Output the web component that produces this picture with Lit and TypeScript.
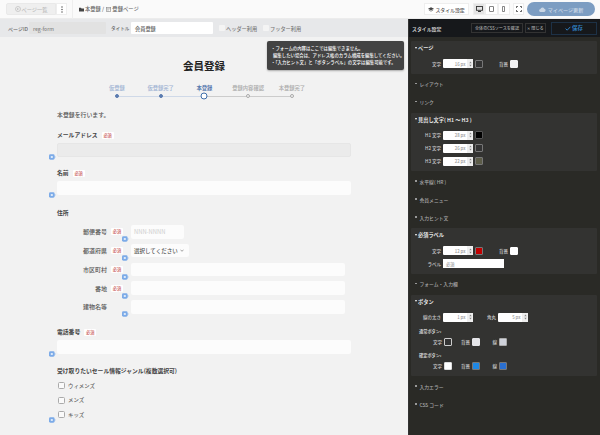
import { LitElement, html, css } from "lit";
import { customElement } from "lit/decorators.js";

const pen = html`<svg class="pen" viewBox="0 0 7 6" width="7" height="6"><rect x="0" y="0.3" width="5.6" height="5.4" rx="1.4" fill="#7cabe8"/><path d="M5.4 2.2 7 3 5.4 3.8z" fill="#7cabe8"/><rect x="1.8" y="2" width="2" height="2" fill="#dbe8f8"/></svg>`;
const req = html`<span class="req">必須</span>`;

@customElement("app-root")
export class AppRoot extends LitElement {
  static styles = css`
    :host { display: block; width: 600px; height: 435px; overflow: hidden; position: relative; background: #f2f2f2; color: #555;
      font-family: "Noto Sans CJK JP", "Noto Sans", sans-serif; font-size: 6px; }
    * { box-sizing: border-box; }
    .top { height: 19px; background: #fafafa; border-bottom: 1px solid #ececec; display: flex; align-items: center; padding: 0 5px 0 6px; }
    .btn-list { width: 50px; height: 12px; background: #efefef; border: 1px solid #e9e9e9; border-radius: 2px 0 0 2px; color: #bbb; font-size: 5.2px; font-weight: 500; display: flex; align-items: center; justify-content: center; gap: 1px; }
    .kebab { width: 11px; height: 12px; background: #fff; border: 1px solid #eee; display: flex; align-items: center; justify-content: center; }
    .sep { width: 1px; height: 19px; background: #eee; margin: 0 6px 0 5px; }
    .crumb { display: flex; align-items: center; gap: 1px; color: #666; font-size: 5.3px; font-weight: 500; white-space: nowrap; }
    .spacer { flex: 1; }
    .wbtn { height: 12px; background: #fff; border: 1px solid #eee; display: flex; align-items: center; justify-content: center; font-size: 4.9px; font-weight: 500; color: #555; white-space: nowrap; }
    .style-btn { width: 45px; gap: 1.5px; margin-right: 4px; }
    .dev { display: flex; margin-right: 3px; }
    .dev .wbtn { width: 12.4px; }
    .dev .on { background: #e4e4e4; }
    .full { width: 11px; margin-right: 3px; }
    .publish { width: 68px; height: 14px; border-radius: 7px; background: #7c9dc2; color: #c9d6e5; font-size: 5.1px; font-weight: 500; display: flex; align-items: center; justify-content: center; gap: 2px; white-space: nowrap; }
    .body { display: flex; height: 416px; }
    .left { width: 408px; overflow: hidden; }
    .sub { height: 18px; background: #e7e8ea; display: flex; align-items: center; padding-left: 8px; font-size: 5px; font-weight: 500; color: #666; white-space: nowrap; }
    .in { height: 12px; font-size: 5px; display: flex; align-items: center; padding-left: 4px; border-radius: 1px; flex: none; }
    .pid-cap { width: 20px; }
    .pid { width: 77px; margin: 0 5px 0 1px; background: #e2e2e2; color: #888; }
    .ttl { width: 82px; margin: 0 6px 0 2px; background: #fff; color: #666; font-size: 5.2px; }
    .cap { width: 18px; font-size: 4.6px; }
    .cb { width: 6px; height: 6px; background: #f4f4f4; border-radius: 1px; margin-right: 1px; flex: none; }
    .sub span.t { width: 31px; margin-right: 6px; color: #777; font-size: 5.2px; }
    .main { padding-left: 57px; position: relative; }
    h1 { margin: 20px 0 0; width: 294px; text-align: center; font-size: 10.5px; line-height: 18px; color: #222; font-weight: 700; }
    .steps { display: flex; margin: 9px 0 0 38px; }
    .step { width: 43.75px; position: relative; text-align: center; font-size: 5.3px; font-weight: 500; line-height: 8px; height: 16px; color: #aaa; white-space: nowrap; }
    .step.done { color: #9fb2d2; }
    .step.cur { color: #5b7cb0; font-weight: 700; }
    .step i { position: absolute; left: 50%; top: 12px; transform: translate(-50%, -50%); width: 4px; height: 4px; border-radius: 50%; background: #f2f2f2; border: 1px solid #aaa; z-index: 1; }
    .step.done i { background: #5b7cb0; border-color: #5b7cb0; }
    .step.cur i { width: 7px; height: 7px; border: 1.2px solid #3f6eaa; background: #fff; }
    .step:not(:last-child)::after { content: ""; position: absolute; left: 50%; width: 100%; top: 11.5px; height: 1px; background: #ccc; }
    .step.done::after { background: #cfd9e8 !important; }
    .intro { margin-top: 10px; line-height: 10px; color: #555; font-size: 5.9px; font-weight: 500; }
    .field { position: relative; width: 294px; }
    .lab { height: 10px; line-height: 10px; font-weight: 700; color: #444; font-size: 5.8px; display: flex; align-items: center; gap: 4px; white-space: nowrap; }
    .req { background: #fff; color: #c65050; font-size: 4.2px; line-height: 7px; height: 7px; padding: 0 1.8px; font-weight: 500; border-radius: 1px; display: inline-block; white-space: nowrap; }
    .box { height: 14px; background: #fcfcfc; border-radius: 2px; margin-top: 2.5px; }
    .box.off { background: #ebebeb; border: 1px solid #e6e6e6; }
    .pen { position: absolute; display: block; }
    .field > .pen { left: -8px; bottom: -3.5px; }
    .addr { margin-top: 7.5px; display: flex; flex-direction: column; gap: 5.25px; }
    .row { position: relative; height: 13.5px; display: flex; align-items: center; }
    .row .rl { width: 50px; text-align: right; color: #555; font-size: 6px; font-weight: 500; white-space: nowrap; }
    .row .rb { width: 24px; padding-left: 4px; display: flex; }
    .row .val { width: 214px; height: 13.5px; background: #fcfcfc; border-radius: 2px; display: flex; align-items: center; padding-left: 3px; }
    .row .val.zip { width: 53px; color: #ccc; font-size: 5.8px; }
    .row .val.sel { width: 58px; color: #555; font-size: 5.5px; font-weight: 500; white-space: nowrap; gap: 2px; }
    .row .pen { left: 65px; bottom: -3.75px; }
    .checks { display: flex; flex-direction: column; gap: 4.5px; margin-top: 5px; }
    .check { display: flex; align-items: center; height: 10px; color: #666; font-size: 5.4px; font-weight: 500; gap: 3px; padding-left: 1px; }
    .check b { width: 7px; height: 7px; border: 1px solid #aaa; border-radius: 1.5px; background: #fafafa; }
    .tip { position: absolute; left: 267px; top: 41px; width: 137px; height: 29px; background: #434343; border-radius: 2px; color: #fff; font-size: 4.4px; font-weight: 500; line-height: 7px; padding: 4px; box-shadow: 0 1px 2px rgba(0,0,0,.3); white-space: nowrap; z-index: 5; }
    .panel { width: 192px; background: #2a2a26; color: #ddd; border-left: 1px solid #333; }
    .phead { height: 18px; background: #16181b; display: flex; align-items: center; padding: 0 3px; font-size: 4.9px; font-weight: 700; color: #ccc; white-space: nowrap; }
    .phead .pb { height: 9.5px; border: 1px solid #333; font-size: 4.1px; font-weight: 500; display: flex; align-items: center; justify-content: center; color: #aaa; white-space: nowrap; }
    .save { width: 46px; height: 13px; border: 1px solid #1d3146; margin-left: 5px; color: #2f7fc0; font-size: 5.4px; display: flex; align-items: center; justify-content: center; gap: 1px; }
    .pbody { padding: 4px 3px 0 2px; }
    .sec { background: #333331; border-radius: 1px; margin: 2px 0 1px; padding-bottom: 5.5px; }
    .sec:first-child { margin-top: 0; }
    .sec .st { height: 13px; display: flex; align-items: center; padding-left: 4px; gap: 1px; font-size: 5.2px; color: #e4e4e4; font-weight: 700; white-space: nowrap; }
    .sec .st::before { content: ""; width: 0; height: 0; border-left: 1.5px solid transparent; border-right: 1.5px solid transparent; border-top: 2.5px solid #fff; }
    .sec .rows { margin-top: 5px; display: flex; flex-direction: column; gap: 4px; }
    .col { height: 18px; display: flex; align-items: center; padding-left: 4px; gap: 3px; font-size: 4.8px; font-weight: 500; color: #a8a8a8; white-space: nowrap; }
    .col::before { content: ""; width: 1.5px; height: 1.5px; background: #999; }
    .pr { display: flex; align-items: center; height: 9px; }
    .pl { width: 30px; text-align: right; font-size: 4.5px; font-weight: 500; color: #ccc; margin-right: 2px; white-space: nowrap; flex: none; }
    .pl.b1 { width: 31px; }
    .pl.b2 { width: 18px; }
    .pl.b3 { width: 17px; }
    .pl.k { width: 21px; }
    .pl.bg { width: 25px; }
    .num { width: 30px; height: 9px; background: #fff; color: #999; font-size: 4.3px; font-weight: 500; display: flex; align-items: center; justify-content: flex-end; border-radius: 1px; margin-right: 2px; flex: none; }
    .num u { text-decoration: none; width: 6px; height: 9px; background: #eee; display: flex; align-items: center; justify-content: center; margin-left: 1.5px; }
    .sw { width: 8px; height: 8px; border: 1px solid #777; border-radius: 1px; flex: none; }
    .txt { width: 61px; height: 9px; background: #fff; color: #999; font-size: 4.2px; font-weight: 500; padding-left: 3px; display: flex; align-items: center; }
    .sh { font-size: 4.2px; color: #ccc; height: 9px; line-height: 9px; padding-left: 8px; font-weight: 700; }
    .gap5 { margin-top: 5px; }
    .gap4 { margin-top: 4px; }
    .gap2 { margin-top: 2px; }
    .fm10 { margin-top: 10px; } .fm11 { margin-top: 11.5px; } .fm13 { margin-top: 13px; } .fm14 { margin-top: 13.75px; } .fm12 { margin-top: 12px; }
    .css-btn { width: 52px; margin-right: 2px; }
    .close-btn { width: 21px; }
  `;

  num(v: string) {
    return html`<div class="num">${v} px<u><svg width="3" height="6" viewBox="0 0 3 6"><path d="M1.5.5 2.7 2.2H.3zM1.5 5.5 2.7 3.8H.3z" fill="#888"/></svg></u></div>`;
  }
  sw(c: string, bc = "#777") {
    return html`<div class="sw" style="background:${c};border-color:${bc}"></div>`;
  }

  render() {
    const steps = [["仮登録", "done"], ["仮登録完了", "done"], ["本登録", "cur"], ["登録内容確認", ""], ["本登録完了", ""]];
    const addr: [string, boolean, string][] = [["郵便番号", true, "zip"], ["都道府県", true, "sel"], ["市区町村", true, ""], ["番地", true, ""], ["建物名等", false, ""]];
    return html`
      <div class="top">
        <div class="btn-list">
          <svg width="6" height="6" viewBox="0 0 6 6"><circle cx="3" cy="3" r="2.5" fill="none" stroke="#bbb" stroke-width=".7"/><path d="M4.2 3H2M3 2 2 3l1 1" fill="none" stroke="#bbb" stroke-width=".6"/></svg>
          ページ一覧
        </div>
        <div class="kebab"><svg width="2" height="7" viewBox="0 0 2 7"><circle cx="1" cy="1" r=".7" fill="#444"/><circle cx="1" cy="3.5" r=".7" fill="#444"/><circle cx="1" cy="6" r=".7" fill="#444"/></svg></div>
        <div class="sep"></div>
        <div class="crumb">
          <svg width="5" height="5" viewBox="0 0 5 5"><path d="M0 .8h2l.5.6H5V4.5H0z" fill="#444"/></svg>
          本登録 /&nbsp;
          <svg width="5" height="5" viewBox="0 0 5 5"><rect x=".3" y=".5" width="4.4" height="4" fill="none" stroke="#888" stroke-width=".6"/><path d="M.3 1.8h4.4M2 1.8v2.7" stroke="#888" stroke-width=".5"/></svg>
          登録ページ
        </div>
        <div class="spacer"></div>
        <div class="wbtn style-btn">
          <svg width="6" height="5" viewBox="0 0 6 5"><path d="M0 1.8 3 .3l3 1.5-3 1.5z" fill="#444"/><path d="M.8 3 3 4.2 5.2 3" fill="none" stroke="#444" stroke-width=".6"/></svg>
          スタイル設定
        </div>
        <div class="dev">
          <div class="wbtn on"><svg width="7" height="6" viewBox="0 0 7 6"><rect x=".5" y=".5" width="6" height="3.8" fill="none" stroke="#333" stroke-width=".9"/><path d="M2 5.5h3" stroke="#333"/></svg></div>
          <div class="wbtn"><svg width="5" height="6" viewBox="0 0 5 6"><rect x=".5" y=".4" width="4" height="5.2" rx=".5" fill="none" stroke="#444" stroke-width=".7"/></svg></div>
          <div class="wbtn"><svg width="3" height="6" viewBox="0 0 3 6"><rect x=".4" y=".4" width="2.2" height="5.2" rx=".5" fill="none" stroke="#444" stroke-width=".7"/></svg></div>
        </div>
        <div class="wbtn full"><svg width="6" height="6" viewBox="0 0 6 6"><path d="M.4 2V.4H2M4 .4h1.6V2M5.6 4v1.6H4M2 5.6H.4V4" fill="none" stroke="#333" stroke-width=".8"/></svg></div>
        <div class="publish">
          <svg width="7" height="5" viewBox="0 0 7 5"><path d="M1.7 5A1.5 1.5 0 0 1 1.5 2 2 2 0 0 1 5.3 1.7 1.7 1.7 0 0 1 5.3 5z" fill="#c9d6e5"/></svg>
          マイページ更新
        </div>
      </div>
      <div class="body">
        <div class="left">
          <div class="sub">
            <span class="pid-cap">ページID</span>
            <div class="in pid">reg-form</div>
            <span class="cap">タイトル</span>
            <div class="in ttl">会員登録</div>
            <div class="cb"></div><span class="t">ヘッダー利用</span>
            <div class="cb"></div><span class="t">フッター利用</span>
          </div>
          <div class="main">
            <h1>会員登録</h1>
            <div class="steps">
              ${steps.map(([t, c]) => html`<div class="step ${c}">${t}<i></i></div>`)}
            </div>
            <div class="intro">本登録を行います。</div>
            <div class="field fm10">
              <div class="lab">メールアドレス ${req}</div>
              <div class="box off"></div>${pen}
            </div>
            <div class="field fm11">
              <div class="lab">名前 ${req}</div>
              <div class="box"></div>${pen}
            </div>
            <div class="field fm13">
              <div class="lab">住所</div>
              <div class="addr">
                ${addr.map(([l, r, k]) => html`<div class="row">
                  <div class="rl">${l}</div>
                  <div class="rb">${r ? req : ""}</div>
                  <div class="val ${k}">${k === "zip" ? "NNN-NNNN" : k === "sel" ? html`選択してください<svg width="4" height="3" viewBox="0 0 4 3"><path d="M.5.7 2 2.3 3.5.7" fill="none" stroke="#666" stroke-width=".6"/></svg>` : ""}</div>
                  ${pen}
                </div>`)}
              </div>
            </div>
            <div class="field fm14">
              <div class="lab">電話番号 ${req}</div>
              <div class="box"></div>${pen}
            </div>
            <div class="field fm12">
              <div class="lab">受け取りたいセール情報ジャンル(複数選択可)</div>
              <div class="checks">
                ${["ウィメンズ", "メンズ", "キッズ"].map((t) => html`<div class="check"><b></b>${t}</div>`)}
              </div>
              ${pen}
            </div>
          </div>
        </div>
        <div class="panel">
          <div class="phead">
            スタイル設定
            <div class="spacer"></div>
            <div class="pb css-btn">全体のCSSソースを確認</div>
            <div class="pb close-btn">✕ 閉じる</div>
            <div class="save">
              <svg width="6" height="5" viewBox="0 0 6 5"><path d="M.6 2.6 2.2 4.2 5.4.8" fill="none" stroke="#2f7fc0" stroke-width="1"/></svg>
              保存
            </div>
          </div>
          <div class="pbody">
            <div class="sec">
              <div class="st">ページ</div>
              <div class="rows">
                <div class="pr"><div class="pl">文字</div>${this.num("16")}${this.sw("#333")}<div class="pl bg">背景</div>${this.sw("#f2f2f2", "#f2f2f2")}</div>
              </div>
            </div>
            <div class="col">レイアウト</div>
            <div class="col">リンク</div>
            <div class="sec">
              <div class="st">見出し文字( H1 〜 H3 )</div>
              <div class="rows">
                <div class="pr"><div class="pl">H1 文字</div>${this.num("28")}${this.sw("#000", "#555")}</div>
                <div class="pr"><div class="pl">H2 文字</div>${this.num("26")}${this.sw("#333")}</div>
                <div class="pr"><div class="pl">H3 文字</div>${this.num("22")}${this.sw("#5c5c48")}</div>
              </div>
            </div>
            <div class="col">水平線( HR )</div>
            <div class="col">会員メニュー</div>
            <div class="col">入力ヒント文</div>
            <div class="sec">
              <div class="st">必須ラベル</div>
              <div class="rows">
                <div class="pr"><div class="pl">文字</div>${this.num("12")}${this.sw("#c00000")}<div class="pl bg">背景</div>${this.sw("#fff", "#fff")}</div>
                <div class="pr"><div class="pl">ラベル</div><div class="txt">必須</div></div>
              </div>
            </div>
            <div class="col">フォーム・入力欄</div>
            <div class="sec">
              <div class="st">ボタン</div>
              <div class="rows">
                <div class="pr"><div class="pl">線の太さ</div>${this.num("1")}<div class="pl k">角丸</div>${this.num("5")}</div>
              </div>
              <div class="sh gap5">通常ボタン:</div>
              <div class="pr gap2"><div class="pl b1">文字</div>${this.sw("#333", "#ccc")}<div class="pl b2">背景</div>${this.sw("#e4e4e8", "#e4e4e8")}<div class="pl b3">線</div>${this.sw("#cfd2da", "#aaa")}</div>
              <div class="sh gap4">確定ボタン:</div>
              <div class="pr gap2"><div class="pl b1">文字</div>${this.sw("#fff", "#ddd")}<div class="pl b2">背景</div>${this.sw("#1e88e5", "#777")}<div class="pl b3">線</div>${this.sw("#2a6fd0", "#777")}</div>
            </div>
            <div class="col">入力エラー</div>
            <div class="col">CSS コード</div>
          </div>
        </div>
      </div>
      <div class="tip">
        ・フォームの内容はここでは編集できません。<br />
        &nbsp;&nbsp;編集したい場合は、アドレス帳のカラム構成を編集してください。<br />
        ・「入力ヒント文」と「ボタンラベル」の文字は編集可能です。
      </div>
    `;
  }
}
